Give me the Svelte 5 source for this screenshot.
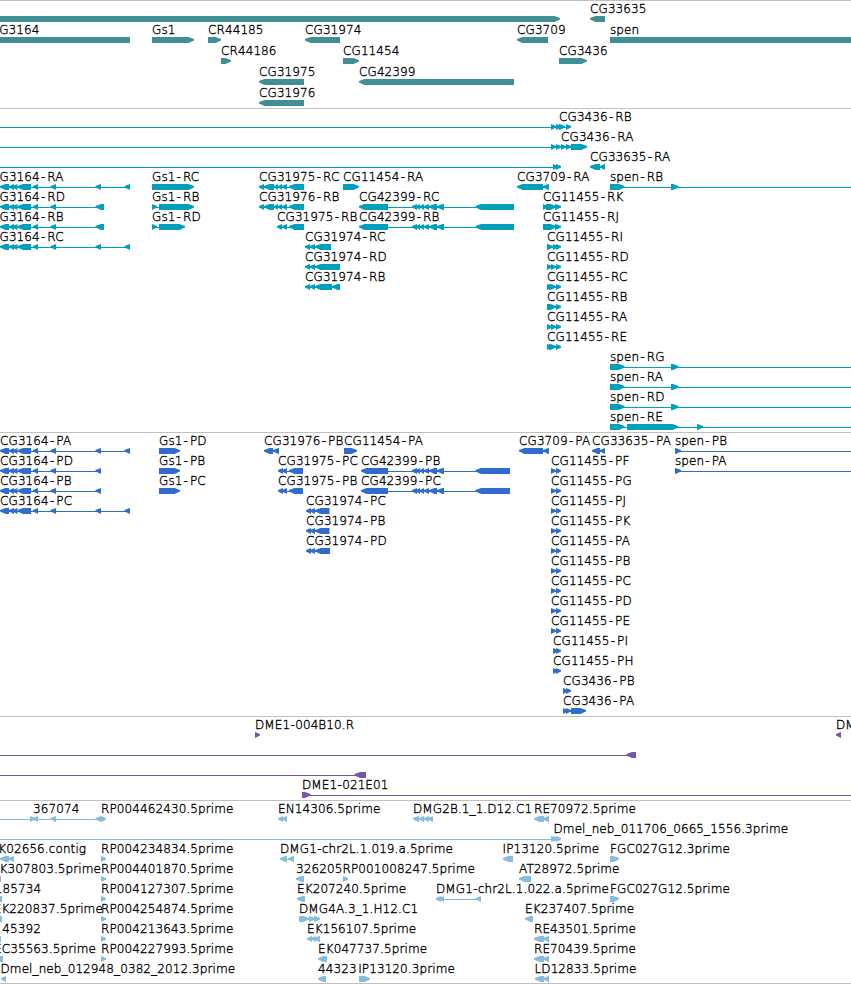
<script lang="ts">
  type Feature = {
    row: number;
    label?: string;
    x?: number; // label position, defaults to the start of the first block
    dir: 1 | -1;
    blocks: number[][];
    line?: number[]; // intron line, defaults to the extent of the blocks
  };

  const WIDTH = 851;
  const HEAD = 5.5;
  const BAR = 6;
  const TOP = 15;

  function f(row: number, label: string, dir: 1 | -1, blocks: number[][], extra: Partial<Feature> = {}): Feature {
    return { row, label, dir, blocks, ...extra };
  }

  // block with a slightly blunt arrow head
  function shape(start: number, end: number, y: number, dir: number) {
    const head = Math.min(HEAD, end - start);
    const bottom = y + BAR;
    const tip = dir > 0 ? end : start;
    const base = tip - dir * head;
    const back = dir > 0 ? start : end;
    return `${back},${y} ${base},${y} ${tip},${y + 2.1} ${tip},${y + 3.5} ${base},${bottom} ${back},${bottom}`;
  }

  function extent(feature: Feature) {
    if (feature.line) return feature.line;
    const b = feature.blocks;
    return [b[0][0] + 2, b[b.length - 1][1] - 2];
  }

  // shared exon structures
  const cg3164 = [[0, 9], [9, 14], [12.5, 17.5], [17.5, 31], [33, 38], [50.5, 56]];
  const cg3164Long = [...cg3164, [95.5, 101], [124.5, 130]];
  const cg31975 = [[259, 264], [264, 274], [274, 278], [278, 282], [282, 287], [289, 304]];
  const cg42399 = [[412, 417], [416, 420], [420, 424], [424, 429], [429, 437], [437, 444]];
  const spen = [[610, 624.5], [671, 678.5]];
  const tail = [[551, 556], [556, 561]];
  const re = [[534, 544], [543, 549]];

  const genes: Feature[] = [
    f(0, "", 1, [[-20, 560]]),
    f(0, "CG33635", -1, [[590, 605]]),
    f(1, "CG3164", -1, [[-20, 130]], { x: -9.3 }),
    f(1, "Gs1", 1, [[152, 194]]),
    f(1, "CR44185", 1, [[208, 221]]),
    f(1, "CG31974", -1, [[305, 340]]),
    f(1, "CG3709", -1, [[517, 548]]),
    f(1, "spen", 1, [[610, 880]]),
    f(2, "CR44186", 1, [[221, 231]]),
    f(2, "CG11454", 1, [[343, 359]]),
    f(2, "CG3436", 1, [[559, 587]]),
    f(3, "CG31975", -1, [[259, 304]]),
    f(3, "CG42399", -1, [[359, 514]]),
    f(4, "CG31976", -1, [[259, 304]]),
  ];

  const transcripts: Feature[] = [
    f(0, "", 1, tail, { line: [0, 556] }),
    f(0, "CG3436-RB", 1, [[559, 565], [566, 571]]),
    f(1, "", 1, tail, { line: [0, 556] }),
    f(1, "CG3436-RA", 1, [[561, 566], [566, 571], [571, 587]]),
    f(2, "", 1, [[553, 558], [556, 561]], { line: [0, 556] }),
    f(2, "CG33635-RA", -1, [[590, 600], [600, 605]]),
    f(3, "CG3164-RA", -1, cg3164Long, { x: -9 }),
    f(3, "Gs1-RC", 1, [[152, 194]]),
    f(3, "CG31975-RC", -1, cg31975),
    f(3, "CG11454-RA", 1, [[343, 359]]),
    f(3, "CG3709-RA", -1, [[517, 543], [543, 549]]),
    f(3, "spen-RB", 1, spen, { line: [612, WIDTH] }),
    f(4, "CG3164-RD", -1, [...cg3164, [95.5, 104]], { x: -9 }),
    f(4, "Gs1-RB", 1, [[152, 157], [159, 194]]),
    f(4, "CG31976-RB", -1, cg31975),
    f(4, "CG42399-RC", -1, [[359, 388], ...cg42399, [475.5, 514]]),
    f(4, "CG11455-RK", 1, [[543, 548], [546, 556], [555, 561]]),
    f(5, "CG3164-RB", -1, [...cg3164, [95.5, 104]], { x: -9 }),
    f(5, "Gs1-RD", 1, [[152, 157], [159, 185]]),
    f(5, "CG31975-RB", -1, [[277, 282], [282, 287], [289, 304]]),
    f(5, "CG42399-RB", -1, [[359, 388], ...cg42399, [475.5, 514]]),
    f(5, "CG11455-RJ", 1, [[543, 556], [555, 561]]),
    f(6, "CG3164-RC", -1, cg3164Long, { x: -9 }),
    f(6, "CG31974-RC", -1, [[305, 310], [310, 315], [315, 331]]),
    f(6, "CG11455-RI", 1, [[547, 553], [553, 558], [556, 561]]),
    f(7, "CG31974-RD", -1, [[305, 310], [310, 315], [315, 340]]),
    f(7, "CG11455-RD", 1, [[547, 552], [551, 556], [556, 561]]),
    f(8, "CG31974-RB", -1, [[305, 310], [310, 315], [315, 332], [332, 340]]),
    f(8, "CG11455-RC", 1, [[547, 552], [549, 556], [556, 561]]),
    f(9, "CG11455-RB", 1, [[547, 556], [556, 561]]),
    f(10, "CG11455-RA", 1, [[547, 552], [551, 556], [556, 561]]),
    f(11, "CG11455-RE", 1, [[547, 552], [549, 556], [556, 561]]),
    f(12, "spen-RG", 1, spen, { line: [612, WIDTH] }),
    f(13, "spen-RA", 1, spen, { line: [612, WIDTH] }),
    f(14, "spen-RD", 1, spen, { line: [612, WIDTH] }),
    f(15, "spen-RE", 1, [[610, 624.5], [627, 678], [697, 703]], { line: [612, WIDTH] }),
  ];

  const proteins: Feature[] = [
    f(0, "CG3164-PA", -1, cg3164Long),
    f(0, "Gs1-PD", 1, [[159, 180]]),
    f(0, "CG31976-PB", -1, [[264, 273], [273, 279]]),
    f(0, "CG11454-PA", 1, [[344, 357]]),
    f(0, "CG3709-PA", -1, [[519, 543], [543, 549]]),
    f(0, "CG33635-PA", -1, [[592, 600], [600, 605]]),
    f(0, "spen-PB", 1, [[675, 681]], { line: [677, WIDTH] }),
    f(1, "CG3164-PD", -1, [...cg3164, [95.5, 101]]),
    f(1, "Gs1-PB", 1, [[159, 180]]),
    f(1, "CG31975-PC", -1, [[278, 283], [282, 287], [289, 303]]),
    f(1, "CG42399-PB", -1, [[361, 388], ...cg42399, [475.5, 510]]),
    f(1, "spen-PA", 1, [[675, 681]], { line: [677, WIDTH] }),
    f(2, "CG3164-PB", -1, [...cg3164, [95.5, 101]]),
    f(2, "Gs1-PC", 1, [[159, 180]]),
    f(2, "CG31975-PB", -1, [[278, 283], [282, 287], [289, 303]]),
    f(2, "CG42399-PC", -1, [[361, 388], ...cg42399, [475.5, 510]]),
    f(3, "CG3164-PC", -1, cg3164Long),
    f(3, "CG31974-PC", -1, [[306, 311], [310, 315], [315, 329.5]]),
    f(4, "CG31974-PB", -1, [[306, 311], [310, 315], [315, 329.5]]),
    f(5, "CG31974-PD", -1, [[306, 311], [310, 315], [315, 330]]),
    ...["PF", "PG", "PJ", "PK", "PA", "PB", "PC", "PD", "PE"].map((p, i) => f(i + 1, "CG11455-" + p, 1, tail)),
    f(10, "CG11455-PI", 1, [[553, 558], [556, 561]]),
    f(11, "CG11455-PH", 1, [[553, 558], [556, 561]]),
    f(12, "CG3436-PB", 1, [[563, 568], [566, 571]]),
    f(13, "CG3436-PA", 1, [[563, 568], [566, 571], [571, 586]]),
  ];

  const clones: Feature[] = [
    f(0, "DME1-004B10.R", 1, [[255, 260]]),
    f(0, "DME1-021E01", -1, [[836, 841]]),
    f(1, "", -1, [[626.5, 636]], { line: [0, 630] }),
    f(2, "", -1, [[354.5, 366]], { line: [0, 358] }),
    f(3, "DME1-021E01", 1, [[302, 310.5]], { line: [304, WIDTH] }),
  ];

  const ests: Feature[] = [
    f(0, "", 1, [[30, 35]], { line: [0, 104] }),
    f(0, "367074", -1, [[33, 38], [50.5, 56], [95.5, 101]], { x: 33 }),
    f(0, "RP004462430.5prime", 1, [[101, 106]]),
    f(0, "EN14306.5prime", -1, [[278, 283], [282, 287]]),
    f(0, "DMG2B.1_1.D12.C1", -1, [[413, 419], [419, 424], [424, 429], [428, 433]]),
    f(0, "RE70972.5prime", -1, re),
    f(1, "", 1, [[551, 556], [553, 558], [556, 561]], { line: [0, 556] }),
    f(1, "Dmel_neb_011706_0665_1556.3prime", 1, [], { x: 553.5, line: [0, 0] }),
    f(2, "K02656.contig", -1, [[0, 9], [8.5, 14]], { x: -1.8 }),
    f(2, "DMG1-chr2L.1.019.a.5prime", -1, [[280, 287], [288, 294]]),
    f(2, "IP13120.5prime", -1, [[503, 513]], { x: 502.5 }),
    f(2, "FGC027G12.3prime", 1, [[610, 619]]),
    f(3, "K307803.5prime", -1, [[-9, 1]], { x: -0.5 }),
    f(3, "326205", -1, [[296, 304]]),
    f(3, "RP001008247.5prime", 1, [[343, 348]], { x: 342.5 }),
    f(3, "AT28972.5prime", -1, [[519, 531]]),
    f(4, "185734", -1, [[-9, 2]], { x: -5.2 }),
    f(4, "EK207240.5prime", -1, [[297, 305]]),
    f(4, "DMG1-chr2L.1.022.a.5prime", -1, [[436, 441], [439, 444], [475.5, 481]]),
    f(4, "FGC027G12.5prime", 1, [[610, 619]]),
    f(5, "EK220837.5prime", -1, [[-9, 2]], { x: -6.3 }),
    f(5, "DMG4A.3_1.H12.C1", 1, [[299, 309], [309, 315], [314, 320]]),
    f(5, "EK237407.5prime", -1, [[525, 533]]),
    f(6, "45392", -1, [[-9, 1]], { x: 2.2 }),
    f(6, "EK156107.5prime", -1, [[307, 312], [311, 316], [314, 320]]),
    f(6, "RE43501.5prime", -1, re),
    f(7, "EC35563.5prime", -1, [[-9, 3]], { x: -6 }),
    f(7, "EK047737.5prime", -1, [[318, 327]]),
    f(7, "RE70439.5prime", -1, re),
    f(8, "Dmel_neb_012948_0382_2012.3prime", -1, [[1, 6]], { x: 0.5 }),
    f(8, "44323", -1, [[318, 326]]),
    f(8, "IP13120.3prime", 1, [[359, 370]], { x: 358.2 }),
    f(8, "LD12833.5prime", -1, [[535, 544], [543, 549]], { x: 534.5 }),
    ...["4234834", "4401870", "4127307", "4254874", "4213643", "4227993"].map((id, i) =>
      f(i + 2, "RP00" + id + ".5prime", 1, [[101, 106]])
    ),
  ];

  const tracks = [
    { name: "genes", height: 107, pitch: 21, features: genes },
    { name: "transcripts", height: 323, pitch: 20, features: transcripts },
    { name: "proteins", height: 283, pitch: 20, features: proteins },
    { name: "clones", height: 83, pitch: 20, features: clones },
    { name: "ests", height: 182, pitch: 20, features: ests },
  ];
</script>

<main class="browser">
  {#each tracks as track}
    <section class="track {track.name}">
      <svg width={WIDTH} height={track.height}>
        {#each track.features as feature}
          {@const y = TOP + feature.row * track.pitch}
          {@const [from, to] = extent(feature)}
          {#if to > from}
            <rect x={from} y={y + 3} width={to - from} height="1" />
          {/if}
          {#each feature.blocks as [start, end]}
            <polygon points={shape(start, end, y, feature.dir)} />
          {/each}
          {#if feature.label}
            {@const [name, suffix] = feature.label.split("-")}
            <!-- two-letter isoform suffixes get a wider gap round the hyphen -->
            {@const wide = suffix?.length === 2}
            <text x={feature.x ?? feature.blocks[0][0]} y={y - 3}
              >{name}{#if suffix}<tspan dx={wide ? 1.1 : 0.3}>-</tspan><tspan dx={wide ? 2 : 0.2}>{suffix}</tspan>{/if}</text>
          {/if}
        {/each}
      </svg>
    </section>
  {/each}
</main>

<style>
  :global(body) {
    background: #fff;
  }

  .browser {
    width: 851px;
    overflow: hidden;
    border-bottom: 1px solid #c0c0c0;
  }

  .track {
    border-top: 1px solid #c0c0c0;
  }

  svg {
    display: block;
    overflow: hidden;
  }

  text {
    font-family: "DejaVu Sans", sans-serif;
    font-size: 12px;
    font-weight: 200;
    letter-spacing: 0.1px;
    fill: #000;
    stroke: #000;
    stroke-width: 0.35px;
  }

  /* ── Track colours ── */
  .genes {
    fill: #408f94;
  }
  .transcripts {
    fill: #009fc0;
  }
  .proteins {
    fill: #306cce;
  }
  .clones {
    fill: #7357a8;
  }
  .ests {
    fill: #86bcde;
  }
</style>
